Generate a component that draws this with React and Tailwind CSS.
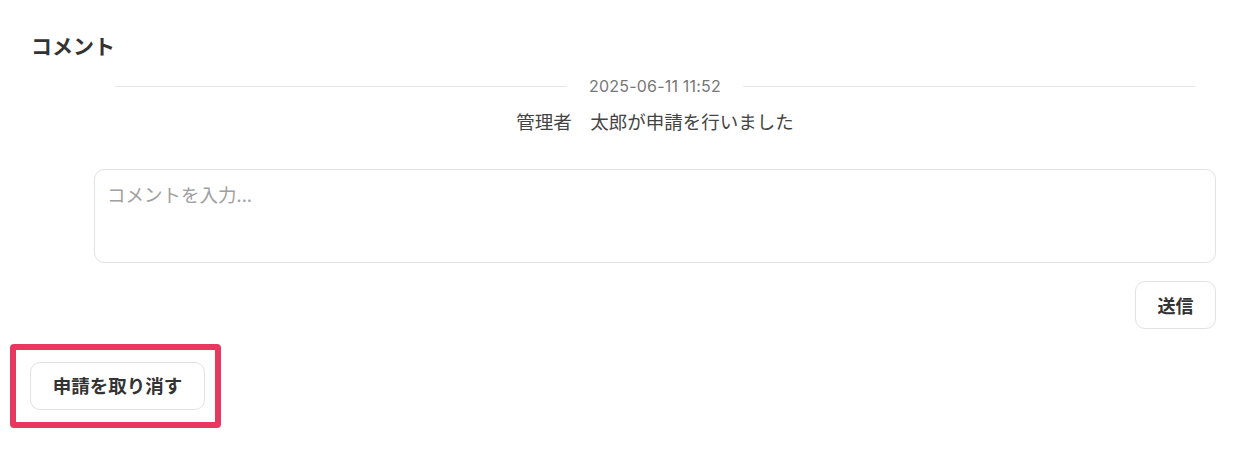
import React from "react";

const jp = "font-['Noto_Sans_CJK_JP',sans-serif]";

const App = () => {
  return (
    <div className={`w-[1238px] h-[454px] bg-white ${jp} text-[#333]`}>
      <div className="pt-[31px] pl-[31px]">
        <h2 className="text-[21px] font-bold leading-[28px] text-[#333]">コメント</h2>
      </div>

      <div className="ml-[94px] mr-[22px]">
        {/* activity log */}
        <div className="px-[21px] mt-[17px]">
          <div className="flex items-center gap-[22px]">
            <div className="flex-1 h-px bg-[#e6e6e6]" />
            <span className="text-[16px] leading-[20px] tracking-[0.2px] text-[#777] font-['Inter',sans-serif]">
              2025-06-11 11:52
            </span>
            <div className="flex-1 h-px bg-[#e6e6e6]" />
          </div>
          <p className="text-center text-[18.5px] leading-[26px] mt-[12px] text-[#444]">
            管理者　太郎が申請を行いました
          </p>
        </div>

        {/* input */}
        <textarea
          className={`block w-full h-[94px] mt-[35px] rounded-[10px] border border-[#e2e2e2] px-[12px] py-[11px] text-[18.5px] leading-[26px] resize-none outline-none placeholder:text-[#a0a0a0] ${jp}`}
          placeholder="コメントを入力..."
        />

        <div className="flex justify-end mt-[18px]">
          <button className="w-[81px] h-[48px] rounded-[10px] border border-[#e2e2e2] bg-white text-[18px] font-bold text-[#333]">
            送信
          </button>
        </div>
      </div>

      <div className="ml-[10px] mt-[15px] w-[211px] h-[84px] border-[6px] border-[#e8385f] rounded-[4px] flex items-center pl-[14px]">
        <button className="w-[175px] h-[48px] rounded-[10px] border border-[#e2e2e2] bg-white text-[18.5px] font-bold text-[#333]">
          申請を取り消す
        </button>
      </div>
    </div>
  );
};

export default App;
